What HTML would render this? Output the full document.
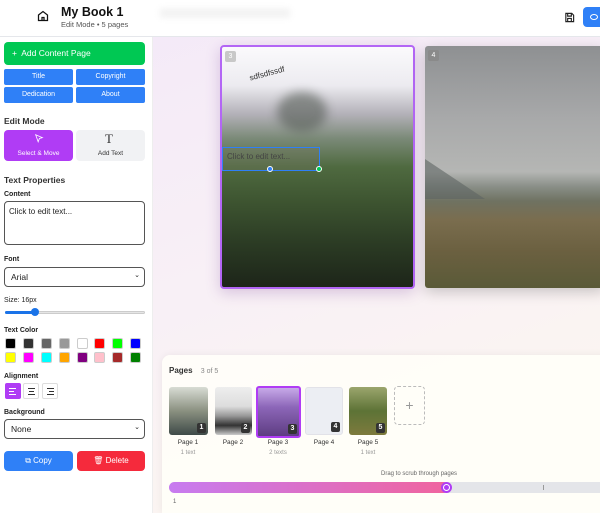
<!DOCTYPE html><html style="overflow:hidden"><head><style>
*{box-sizing:border-box;margin:0;padding:0}
html,body{width:600px;height:513px;overflow:hidden}
body{font-family:"Liberation Sans",sans-serif;position:relative;background:linear-gradient(160deg,#f3e8f8 0%,#f8f0f6 50%,#fdf8ee 100%)}
.a{position:absolute}
.hdr{left:0;top:0;width:600px;height:37px;background:#fff;border-bottom:1px solid #e5e7eb;z-index:3}
.side{left:0;top:37px;width:153px;height:476px;background:#fff;border-right:1px solid #eee}
.btn{position:absolute;background:#2f80f7;color:#fff;font-size:7px;text-align:center;border-radius:2px;line-height:16px;height:16px}
.lbl{position:absolute;font-size:7px;font-weight:bold;color:#222}
.sec{position:absolute;font-size:8.5px;font-weight:bold;color:#333}
.sw{position:absolute;width:11px;height:11px;border:1px solid #ccc;border-radius:2px}
.th{position:absolute;top:387px;height:48px;border-radius:3px;overflow:hidden}
.num{position:absolute;right:2px;bottom:2px;background:#333;color:#fff;font-size:7px;font-weight:bold;width:9px;height:10px;text-align:center;line-height:10px;border-radius:2px}
.pl{position:absolute;top:439px;font-size:6.5px;color:#333;width:40px;text-align:center}
.ps{position:absolute;top:450px;font-size:6px;color:#999;width:40px;text-align:center}
.ln{position:absolute;height:1px}
</style></head><body>
<div class="a hdr">
<svg class="a" style="left:37px;top:10px" width="12" height="12" viewBox="0 0 24 24" fill="none" stroke="#111" stroke-width="2.5"><path d="M3 10l9-7 9 7v11H3z"/><path d="M10 21v-6h4v6"/></svg>
<div class="a" style="left:61px;top:5px;font-size:12.5px;font-weight:bold;color:#111">My Book 1</div>
<div class="a" style="left:61px;top:20px;font-size:7.5px;color:#555">Edit Mode • 5 pages</div>
<div class="a" style="left:160px;top:8px;width:130px;height:10px;background:#f3f3f3;filter:blur(3px)"></div>
<svg class="a" style="left:564px;top:12px" width="11" height="11" viewBox="0 0 24 24" fill="none" stroke="#222" stroke-width="2.5"><path d="M4 3h13l4 4v14H4z"/><path d="M8 3v6h8V3M8 21v-7h8v7"/></svg>
<div class="a" style="left:583px;top:7px;width:30px;height:20px;background:#2f80f7;border-radius:4px"></div>
<div class="a" style="left:590px;top:14px;width:8px;height:6px;border:1.5px solid #fff;border-radius:50%"></div>
</div>
<div class="a side">
<div class="a" style="left:4px;top:5px;width:141px;height:23px;background:#00c853;border-radius:4px;color:#fff;font-size:8.5px;line-height:23px;padding-left:8px">+&nbsp; Add Content Page</div>
<div class="btn" style="left:4px;top:32px;width:69px">Title</div>
<div class="btn" style="left:76px;top:32px;width:69px">Copyright</div>
<div class="btn" style="left:4px;top:50px;width:69px">Dedication</div>
<div class="btn" style="left:76px;top:50px;width:69px">About</div>
<div class="sec" style="left:4px;top:79px">Edit Mode</div>
<div class="a" style="left:4px;top:93px;width:69px;height:31px;background:#b03cf5;border-radius:4px;color:#fff;font-size:6.5px;text-align:center;padding-top:20px">Select &amp; Move</div>
<svg class="a" style="left:34px;top:96px" width="10" height="11" viewBox="0 0 24 24" fill="none" stroke="#fff" stroke-width="2"><path d="M4 3l16 7-7 2-3 8z"/></svg>
<div class="a" style="left:76px;top:93px;width:69px;height:31px;background:#f1f2f4;border-radius:4px;color:#333;font-size:6.5px;text-align:center;padding-top:20px">Add Text</div>
<div class="a" style="left:105px;top:96px;font-family:'Liberation Serif';font-size:13px;color:#333;line-height:12px">T</div>
<div class="sec" style="left:4px;top:138px">Text Properties</div>
<div class="lbl" style="left:4px;top:154px">Content</div>
<div class="a" style="left:4px;top:164px;width:141px;height:44px;border:1px solid #555;border-radius:4px;font-size:8px;padding:5px 4px;color:#222">Click to edit text...</div>
<div class="lbl" style="left:4px;top:219px">Font</div>
<div class="a" style="left:4px;top:230px;width:141px;height:20px;border:1px solid #555;border-radius:4px;font-size:8.5px;padding:4px 6px;color:#222">Arial<span style="position:absolute;right:4px;top:3px;font-size:7px">⌄</span></div>
<div class="lbl" style="left:4px;top:260px;font-weight:normal">Size: 16px</div>
<div class="a" style="left:5px;top:274px;width:140px;height:3px;background:#e5e5e5;border:1px solid #ccc;border-radius:2px"></div>
<div class="a" style="left:5px;top:274px;width:30px;height:3px;background:#1a73e8;border-radius:2px"></div>
<div class="a" style="left:31px;top:271px;width:8px;height:8px;background:#1a73e8;border-radius:50%"></div>
<div class="lbl" style="left:4px;top:290px">Text Color</div>
<div class="sw" style="left:5px;top:301px;background:#000"></div><div class="sw" style="left:23px;top:301px;background:#333"></div><div class="sw" style="left:41px;top:301px;background:#666"></div><div class="sw" style="left:59px;top:301px;background:#999"></div><div class="sw" style="left:77px;top:301px;background:#fff"></div><div class="sw" style="left:94px;top:301px;background:#f00"></div><div class="sw" style="left:112px;top:301px;background:#0f0"></div><div class="sw" style="left:130px;top:301px;background:#00f"></div>
<div class="sw" style="left:5px;top:315px;background:#ff0"></div><div class="sw" style="left:23px;top:315px;background:#f0f"></div><div class="sw" style="left:41px;top:315px;background:#0ff"></div><div class="sw" style="left:59px;top:315px;background:#ffa500"></div><div class="sw" style="left:77px;top:315px;background:#800080"></div><div class="sw" style="left:94px;top:315px;background:#ffc0cb"></div><div class="sw" style="left:112px;top:315px;background:#a52a2a"></div><div class="sw" style="left:130px;top:315px;background:#008000"></div>
<div class="lbl" style="left:4px;top:336px">Alignment</div>
<div class="a" style="left:5px;top:346px;width:16px;height:16px;background:#b03cf5;border-radius:2px"></div>
<div class="a" style="left:23px;top:346px;width:16px;height:16px;border:1px solid #ddd;border-radius:2px"></div>
<div class="a" style="left:42px;top:346px;width:16px;height:16px;border:1px solid #ddd;border-radius:2px"></div>
<div class="ln" style="left:9px;top:351px;width:7px;background:#fff"></div><div class="ln" style="left:9px;top:354px;width:5px;background:#fff"></div><div class="ln" style="left:9px;top:357px;width:7px;background:#fff"></div>
<div class="ln" style="left:28px;top:351px;width:7px;background:#333"></div><div class="ln" style="left:29px;top:354px;width:5px;background:#333"></div><div class="ln" style="left:28px;top:357px;width:7px;background:#333"></div>
<div class="ln" style="left:47px;top:351px;width:7px;background:#333"></div><div class="ln" style="left:49px;top:354px;width:5px;background:#333"></div><div class="ln" style="left:47px;top:357px;width:7px;background:#333"></div>
<div class="lbl" style="left:4px;top:372px">Background</div>
<div class="a" style="left:4px;top:382px;width:141px;height:20px;border:1px solid #555;border-radius:4px;font-size:8.5px;padding:4px 6px;color:#222">None<span style="position:absolute;right:4px;top:3px;font-size:7px">⌄</span></div>
<div class="a" style="left:4px;top:414px;width:69px;height:20px;background:#2f80f7;border-radius:4px;color:#fff;font-size:8px;text-align:center;line-height:20px">⧉ Copy</div>
<div class="a" style="left:77px;top:414px;width:68px;height:20px;background:#f52a3c;border-radius:4px;color:#fff;font-size:8px;text-align:center;line-height:20px">🗑 Delete</div>
</div>
<div class="a" style="left:220px;top:45px;width:195px;height:244px;border:2px solid #b366f5;border-radius:4px;overflow:hidden;box-shadow:0 4px 14px rgba(120,60,150,.25);background:linear-gradient(180deg,#fbfafc 0%,#ecebf0 16%,#b3b1b8 28%,#7b8a78 38%,#4f6a40 50%,#3e5531 64%,#2b3b24 82%,#1d2519 100%)">
<div class="a" style="left:55px;top:45px;width:50px;height:40px;border-radius:50%;background:#555c55;opacity:.6;filter:blur(5px)"></div>
<div class="a" style="left:3px;top:4px;width:11px;height:11px;background:#c8c8c8;border-radius:2px;color:#fff;font-size:7px;text-align:center;line-height:11px">3</div>
<div class="a" style="left:27px;top:22px;font-size:8px;color:#333;transform:rotate(-15deg)">sdfsdfssdf</div>
<div class="a" style="left:0;top:100px;width:98px;height:24px;border:1.5px solid #2f80f7;background:rgba(120,120,100,.3);font-size:8px;color:#444;padding:4px 4px">Click to edit text...</div>
<div class="a" style="left:45px;top:119px;width:6px;height:6px;border-radius:50%;background:#2f80f7;border:1px solid #fff"></div>
<div class="a" style="left:94px;top:119px;width:6px;height:6px;border-radius:50%;background:#00c853;border:1px solid #fff"></div>
</div>
<div class="a" style="left:425px;top:46px;width:180px;height:242px;border-radius:3px;overflow:hidden;box-shadow:0 4px 14px rgba(0,0,0,.2);background:linear-gradient(180deg,#8e9092 0%,#a8a9aa 30%,#b5b6b4 52%,#8a8f88 58%,#6f7262 64%,#7a6d4e 72%,#6b6040 85%,#5a5a38 100%)">
<div class="a" style="left:3px;top:4px;width:11px;height:11px;background:#8a8a8a;border-radius:2px;color:#fff;font-size:7px;text-align:center;line-height:11px">4</div>
<div class="a" style="left:0;top:113px;width:0;height:0;border-right:60px solid transparent;border-bottom:40px solid rgba(93,100,98,.6)"></div>
</div>
<div class="a" style="left:162px;top:355px;width:450px;height:158px;background:rgba(255,254,248,.92);border-radius:8px 8px 0 0;box-shadow:0 0 8px rgba(0,0,0,.06)"></div>
<div class="a" style="left:169px;top:366px;font-size:8px;font-weight:bold;color:#333">Pages <span style="font-weight:normal;color:#888;font-size:7px;margin-left:6px">3 of 5</span></div>
<div class="th" style="left:169px;width:39px;background:linear-gradient(180deg,#d8dcd4,#8a9080 50%,#3e4a48)"><div class="num">1</div></div>
<div class="th" style="left:215px;width:37px;background:linear-gradient(180deg,#eee 0,#ddd 40%,#999 60%,#333 80%,#ccc)"><div class="num">2</div></div>
<div class="th" style="left:256px;top:386px;width:45px;height:52px;border:2px solid #b03cf5;background:linear-gradient(180deg,#c7a9e8,#8c66b8 40%,#5e3d82)"><div class="num">3</div></div>
<div class="th" style="left:305px;width:38px;background:#eceef3;border:1px solid #e2e2e8"><div class="num">4</div></div>
<div class="th" style="left:349px;width:38px;background:linear-gradient(180deg,#9ba56d,#5d7336 50%,#7d7a3d)"><div class="num">5</div></div>
<div class="a" style="left:394px;top:386px;width:31px;height:39px;border:1px dashed #bbb;border-radius:4px;color:#999;font-size:14px;text-align:center;line-height:37px">+</div>
<div class="pl" style="left:168px">Page 1</div><div class="ps" style="left:168px">1 text</div>
<div class="pl" style="left:213px">Page 2</div>
<div class="pl" style="left:258px">Page 3</div><div class="ps" style="left:258px">2 texts</div>
<div class="pl" style="left:304px">Page 4</div>
<div class="pl" style="left:348px">Page 5</div><div class="ps" style="left:348px">1 text</div>
<div class="a" style="left:381px;top:471px;font-size:6px;color:#666">Drag to scrub through pages</div>
<div class="a" style="left:169px;top:482px;width:440px;height:11px;background:#e4e5e9;border-radius:6px"></div>
<div class="a" style="left:169px;top:482px;width:280px;height:11px;background:linear-gradient(90deg,#c77bf0,#f0649e);border-radius:6px"></div>
<div class="a" style="left:441px;top:482px;width:11px;height:11px;background:#fff;border:2px solid #b03cf5;border-radius:50%"></div>
<div class="a" style="left:444px;top:485px;width:5px;height:5px;background:#b03cf5;border-radius:50%"></div>
<div class="a" style="left:543px;top:485px;width:1px;height:5px;background:#999"></div>
<div class="a" style="left:173px;top:499px;font-size:6px;color:#666">1</div>
</body></html>
